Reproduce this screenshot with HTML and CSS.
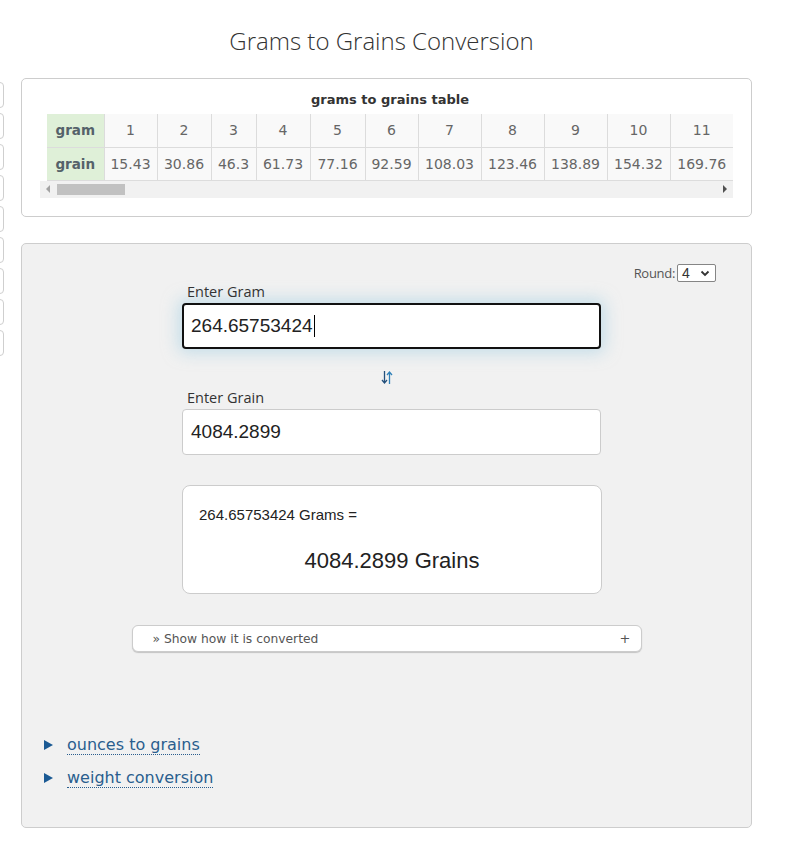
FILE: index.html
```html
<!DOCTYPE html>
<html lang="en">
<head>
<meta charset="utf-8">
<title>Grams to Grains Conversion</title>
<link rel="stylesheet" href="styles.css">
</head>
<body>
<div class="share">
  <span class="share-btn"></span>
  <span class="share-btn"></span>
  <span class="share-btn"></span>
  <span class="share-btn"></span>
  <span class="share-btn"></span>
  <span class="share-btn"></span>
  <span class="share-btn"></span>
  <span class="share-btn"></span>
  <span class="share-btn"></span>
</div>
<main class="page">
  <h1 class="title">Grams to Grains Conversion</h1>

  <section class="card table-card">
    <div class="caption">grams to grains table</div>
    <div class="scroller">
      <div class="table-clip">
        <table class="conv">
          <colgroup>
            <col class="c-h"><col class="c1"><col class="c2"><col class="c3"><col class="c4"><col class="c5"><col class="c6"><col class="c7"><col class="c7"><col class="c7"><col class="c7"><col class="c7">
          </colgroup>
          <tr><th>gram</th><td>1</td><td>2</td><td>3</td><td>4</td><td>5</td><td>6</td><td>7</td><td>8</td><td>9</td><td>10</td><td>11</td></tr>
          <tr><th>grain</th><td>15.43</td><td>30.86</td><td>46.3</td><td>61.73</td><td>77.16</td><td>92.59</td><td>108.03</td><td>123.46</td><td>138.89</td><td>154.32</td><td>169.76</td></tr>
        </table>
      </div>
      <div class="hscroll">
        <span class="arrow-l"></span>
        <span class="thumb"></span>
        <span class="track"></span>
        <span class="arrow-r"></span>
      </div>
    </div>
  </section>

  <section class="card calc">
    <div class="round-row">
      <span class="round-label">Round:</span>
      <div class="select"><span>4</span>
        <svg width="10" height="7" viewBox="0 0 10 7"><path d="M1.5 1.5 L5 5 L8.5 1.5" fill="none" stroke="#333" stroke-width="1.8"/></svg>
      </div>
    </div>
    <div class="form">
      <div class="field-label">Enter Gram</div>
      <div class="field focus">264.65753424<span class="caret"></span></div>
      <div class="swap">
        <svg width="12" height="15" viewBox="0 0 12 15">
          <path d="M3.5 1 V13 M1 10 L3.5 13 L6 10" fill="none" stroke="#24507c" stroke-width="1.3"/>
          <path d="M8.5 14 V2 M6 5 L8.5 2 L11 5" fill="none" stroke="#2f80b8" stroke-width="1.3"/>
        </svg>
      </div>
      <div class="field-label second">Enter Grain</div>
      <div class="field">4084.2899</div>
      <div class="result">
        <div class="result-from">264.65753424 Grams =</div>
        <div class="result-to">4084.2899 Grains</div>
      </div>
    </div>
    <div class="show-how"><span>» Show how it is converted</span><span class="plus">+</span></div>
    <ul class="links">
      <li><a href="#">ounces to grains</a></li>
      <li><a href="#">weight conversion</a></li>
    </ul>
  </section>
</main>
</body>
</html>
```

FILE: styles.css
```css
* { box-sizing: border-box; }
html, body { margin: 0; padding: 0; background: #fff; }
body { font-family: "DejaVu Sans", Verdana, sans-serif; color: #333; position: relative; }

.share {
  position: absolute;
  left: -24px;
  top: 82px;
  display: flex;
  flex-direction: column;
  gap: 5px;
}
.share-btn {
  display: block;
  width: 28px;
  height: 26px;
  border: 1px solid #cfcfcf;
  border-radius: 4px;
  background: #fff;
}

.page {
  width: 752px;
  padding-left: 21px;
  padding-top: 26px;
}

.title {
  margin: 0 0 22px 0;
  font-family: "Open Sans", "Lato", sans-serif;
  font-weight: 300;
  font-size: 24px;
  line-height: 30px;
  color: #333;
  text-align: center;
  padding-right: 10px;
}

.card {
  width: 731px;
  border: 1px solid #cdcdcd;
  border-radius: 5px;
}

.table-card {
  background: #fff;
  padding: 13px 17px 18px 18px;
  height: 139px;
}
.caption {
  font-weight: bold;
  font-size: 13px;
  line-height: 16px;
  text-align: center;
  color: #333;
  margin-bottom: 6px;
  padding-left: 6px;
}
.scroller { width: 693px; }
.table-clip {
  overflow: hidden;
  padding-left: 7px;
}
.conv {
  border-collapse: collapse;
  table-layout: fixed;
  width: 686px;
  font-size: 14px;
}
.conv col.c-h { width: 57px; }
.conv col.c1 { width: 53px; }
.conv col.c2 { width: 54px; }
.conv col.c3 { width: 45px; }
.conv col.c4 { width: 54px; }
.conv col.c5 { width: 55px; }
.conv col.c6 { width: 53px; }
.conv col.c7 { width: 63px; }
.conv th, .conv td {
  border: 1px solid #dcdcdc;
  height: 33px;
  padding: 0 2px;
  text-align: center;
  white-space: nowrap;
}
.conv th {
  background: #dff0d8;
  color: #55626a;
  font-weight: bold;
  font-size: 13.5px;
}
.conv td {
  background: #f9f9f9;
  color: #666;
}
.conv tr:first-child th, .conv tr:first-child td { border-top: none; }
.conv tr th:first-child { border-left: none; }
.conv tr td:last-child { border-right: none; }

.hscroll {
  height: 17px;
  background: #f1f1f1;
  display: flex;
  align-items: center;
}
.arrow-l {
  width: 0; height: 0;
  margin-left: 6px;
  border-top: 4px solid transparent;
  border-bottom: 4px solid transparent;
  border-right: 4px solid #a3a3a3;
}
.thumb {
  margin-left: 7px;
  width: 68px;
  height: 11px;
  background: #c1c1c1;
}
.track { flex: 1; }
.arrow-r {
  width: 0; height: 0;
  margin-right: 6px;
  border-top: 4px solid transparent;
  border-bottom: 4px solid transparent;
  border-left: 4px solid #505050;
}

.calc {
  margin-top: 26px;
  background: #f1f1f1;
  padding: 20px 0 39px 0;
}
.round-row {
  display: flex;
  justify-content: flex-end;
  align-items: center;
  height: 18px;
  gap: 2px;
  padding-right: 35px;
}
.round-label {
  font-family: "Open Sans", "Lato", sans-serif;
  font-size: 13px;
  color: #555;
  letter-spacing: -0.3px;
}
.select {
  width: 39px;
  height: 18px;
  background: #fff;
  border: 1px solid #858585;
  border-radius: 2px;
  display: flex;
  align-items: center;
  justify-content: space-between;
  padding: 0 5px 0 4px;
  font-family: "Liberation Sans", Arial, sans-serif;
  font-size: 14px;
  color: #333;
}

.form {
  margin-left: 160px;
  width: 420px;
}
.field-label {
  font-family: "Open Sans", "Lato", sans-serif;
  font-size: 14.5px;
  line-height: 18px;
  color: #333;
  margin-top: 1px;
  padding-left: 5px;
}
.field-label.second { margin-top: 3px; }
.field {
  margin-top: 2px;
  width: 419px;
  height: 46px;
  background: #fff;
  border: 1px solid #cccccc;
  border-radius: 4px;
  padding-left: 8px;
  display: flex;
  align-items: center;
  font-family: "Liberation Sans", Arial, sans-serif;
  font-size: 19px;
  color: #222;
}
.field.focus {
  border: 2px solid #111;
  padding-left: 7px;
  box-shadow: 0 0 16px 4px rgba(160, 205, 225, 0.55);
}
.caret {
  display: inline-block;
  width: 1px;
  height: 22px;
  background: #000;
  margin-left: 1px;
}
.swap {
  margin-top: 21px;
  height: 16px;
  display: flex;
  padding-left: 199px;
}

.result {
  margin-top: 30px;
  width: 420px;
  height: 109px;
  background: #fff;
  border: 1px solid #cccccc;
  border-radius: 8px;
  font-family: "Liberation Sans", Arial, sans-serif;
  color: #222;
  padding: 20px 16px 0 16px;
}
.result-from {
  font-size: 15px;
  line-height: 18px;
}
.result-to {
  margin-top: 24px;
  font-size: 22px;
  line-height: 26px;
  text-align: center;
}

.show-how {
  margin: 31px auto 0 auto;
  width: 510px;
  height: 27px;
  background: #fff;
  border: 1px solid #cccccc;
  border-radius: 6px;
  box-shadow: 0 1px 1px #c4c4c4;
  display: flex;
  justify-content: space-between;
  align-items: center;
  padding: 0 10px 0 20px;
  font-size: 12.3px;
  color: #555;
}
.plus { font-size: 13px; color: #555; }

.links {
  list-style: none;
  margin: 83px 0 0 0;
  padding: 0 0 0 22px;
}
.links li {
  display: flex;
  align-items: center;
  height: 20px;
  font-size: 16px;
}
.links li + li { margin-top: 13px; }
.links li::before {
  content: "";
  width: 0; height: 0;
  border-top: 5px solid transparent;
  border-bottom: 5px solid transparent;
  border-left: 9px solid #1b5a94;
  margin-right: 14px;
}
.links a {
  color: #2a5e8e;
  text-decoration: none;
  border-bottom: 1px dotted #2a5e8e;
  line-height: 18px;
}
```
